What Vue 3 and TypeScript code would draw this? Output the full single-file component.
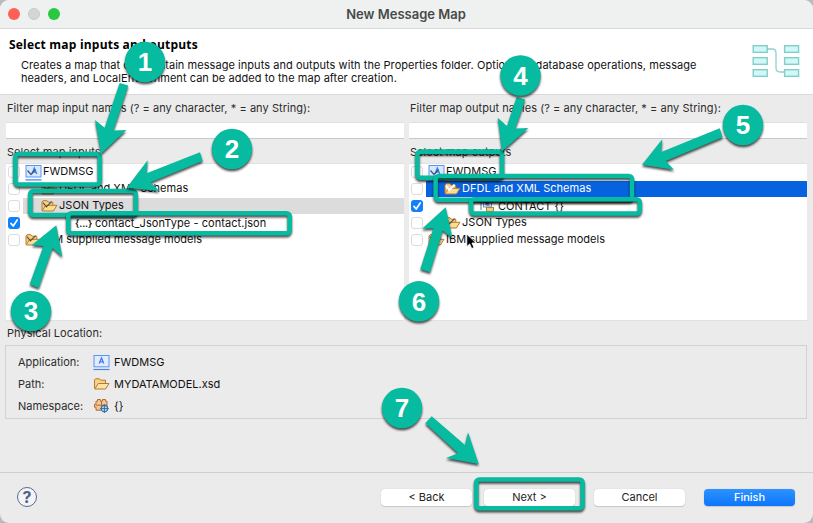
<script setup lang="ts">
type IconKind = 'app' | 'folder' | 'json' | 'element'

interface TreeRow {
  label: string
  level: number
  icon: IconKind
  checked?: boolean
  state?: 'muted' | 'active'
}

interface Pane {
  id: string
  filterLabel: string
  selectLabel: string
  rows: TreeRow[]
}

const panes: Pane[] = [
  {
    id: 'inputs',
    filterLabel: 'Filter map input names (? = any character, * = any String):',
    selectLabel: 'Select map inputs',
    rows: [
      { label: 'FWDMSG', level: 0, icon: 'app' },
      { label: 'DFDL and XML Schemas', level: 1, icon: 'folder' },
      { label: 'JSON Types', level: 1, icon: 'folder', state: 'muted' },
      { label: 'contact_JsonType - contact.json', level: 2, icon: 'json', checked: true },
      { label: 'IBM supplied message models', level: 0, icon: 'folder' },
    ],
  },
  {
    id: 'outputs',
    filterLabel: 'Filter map output names (? = any character, * = any String):',
    selectLabel: 'Select map outputs',
    rows: [
      { label: 'FWDMSG', level: 0, icon: 'app' },
      { label: 'DFDL and XML Schemas', level: 1, icon: 'folder', state: 'active' },
      { label: 'CONTACT {}', level: 2, icon: 'element', checked: true },
      { label: 'JSON Types', level: 1, icon: 'folder' },
      { label: 'IBM supplied message models', level: 0, icon: 'folder' },
    ],
  },
]

const boxes = [
  { x: 15.3, y: 154, w: 84.5, h: 30.5 },
  { x: 30.3, y: 191, w: 105.4, h: 24 },
  { x: 68.3, y: 213.3, w: 221.4, h: 20 },
  { x: 417.3, y: 151.6, w: 84.7, h: 26.2 },
  { x: 435.6, y: 176, w: 196.4, h: 23.8 },
  { x: 471, y: 199.3, w: 168.8, h: 14.2 },
  { x: 476.2, y: 479.5, w: 106.4, h: 28.8 },
]

const arrows = [
  '119.7,83 128.3,85.5 113.5,130.5 126.3,130 101,154 95,120 104.7,127.7',
  '200,152.3 202.7,161 150.7,182.3 159.3,191 126.7,187.7 147.7,160.3 146.7,173.3',
  '29.7,284.3 38.7,288 52.5,248 62.3,256.7 56.3,225.3 31.7,245.3 43.5,246',
  '516.7,97 525.3,99.5 515.3,128.5 528.3,128 502,151.5 497.7,117.7 507,126',
  '719.7,128.3 722.7,137.3 665.7,161 674,169.7 642,164.7 662.3,139.3 661.3,152',
  '420.3,269.3 430,272.3 442.7,230.5 452.3,237.7 445.7,207.3 422,228.7 433.5,228.3',
  '431.7,416.3 425.3,423.3 458,453.3 446,458 478.7,464 468,432.3 465,445',
]

const badges = [
  { n: 1, x: 145, y: 62 },
  { n: 2, x: 232, y: 149 },
  { n: 3, x: 31, y: 311 },
  { n: 4, x: 520.5, y: 75.5 },
  { n: 5, x: 743, y: 125 },
  { n: 6, x: 419, y: 301.3 },
  { n: 7, x: 402, y: 408 },
]
</script>

<template>
  <main class="window">
    <header class="titlebar">
      <div class="lights">
        <i class="light red"></i><i class="light grey"></i><i class="light green"></i>
      </div>
      <span class="title">New Message Map</span>
    </header>

    <section class="banner">
      <div>
        <h1>Select map inputs and outputs</h1>
        <p>
          Creates a map that can contain message inputs and outputs with the Properties folder. Optionally, database operations, message<br />
          headers, and LocalEnvironment can be added to the map after creation.
        </p>
      </div>
      <svg class="map-art" width="48" height="34" viewBox="0 0 48 34" fill="none" stroke="#7fcfce">
        <path d="M15 5h5q4 0 4 4v15q0 4 4 4h5" stroke="#8fd0d0" stroke-width="1.3" />
        <g fill="#d3f7f6" stroke-width="1.4">
          <rect x="1.2" y="1.7" width="14" height="6.6" />
          <rect x="1.2" y="13.7" width="14" height="6.6" />
          <rect x="1.2" y="25.7" width="14" height="6.6" />
          <rect x="32.6" y="1.7" width="14" height="6.6" />
          <rect x="32.6" y="13.7" width="14" height="6.6" />
          <rect x="32.6" y="25.7" width="14" height="6.6" />
        </g>
      </svg>
    </section>

    <section class="content">
      <div class="panes">
        <div v-for="pane in panes" :key="pane.id" class="pane">
          <label class="caption">{{ pane.filterLabel }}</label>
          <div class="field"></div>
          <label class="caption">{{ pane.selectLabel }}</label>
          <div class="tree">
            <div v-for="row in pane.rows" :key="row.label" class="row">
              <span class="check" :class="{ on: row.checked }">
                <svg v-if="row.checked" width="12" height="12" viewBox="0 0 12 12" fill="none" stroke="#fff" stroke-width="1.7" stroke-linecap="round" stroke-linejoin="round">
                  <path d="M3 6.4 5.2 9 9.2 3" />
                </svg>
              </span>
              <span class="item" :class="[row.state, 'level-' + row.level]">
                <svg v-if="row.icon === 'app'" width="17" height="17" viewBox="0 0 17 17" fill="none">
                  <rect x="1" y="1.5" width="15" height="11.5" fill="#d8e8fd" stroke="#5c94f0" />
                  <path d="M.5 15.8h16" stroke="#4784ee" stroke-width="1.2" />
                  <path d="M7 10 9.3 4.2 11.8 10M8 8h3" stroke="#3c7ff0" stroke-width="1.4" />
                  <path d="M2.5 6.5 6 10.5 10.5 5.5" stroke="#40587f" stroke-width="1.3" />
                </svg>
                <svg v-else-if="row.icon === 'folder'" width="17" height="16" viewBox="0 0 17 16">
                  <path d="M1 12.5V4l1-1.3h4l1.2 1.5h4.6v3.3" fill="#f6d28a" stroke="#b67b31" />
                  <path d="m1.2 12.8 3.5-5.5H16L12.4 13H1.5z" fill="#fbdc95" stroke="#b67b31" stroke-linejoin="round" />
                  <path v-if="row.state === 'active'" d="M2 4.8 5.4 9 10.6 3.6" fill="none" stroke="#fff" stroke-width="2" />
                  <path v-else d="M2 4.6 5.4 9 10.6 3.6" fill="none" stroke="#5b4a35" stroke-width="1.1" />
                </svg>
                <span v-else-if="row.icon === 'json'" class="braces">{...}</span>
                <svg v-else width="17" height="16" viewBox="0 0 17 16" fill="none">
                  <path d="M2 2v10" stroke="#697386" />
                  <rect x="4.5" y="2" width="8" height="7" fill="#e1edff" stroke="#6b95d2" />
                  <path d="M10.5 4H7v3h3.5M7 5.5h3" stroke="#255aa8" />
                  <rect x="7.5" y="9.5" width="7" height="4" fill="#f4cb7d" stroke="#b78039" />
                </svg>
                <span class="name">{{ row.label }}</span>
              </span>
            </div>
          </div>
        </div>
      </div>

      <label class="caption location-caption">Physical Location:</label>
      <div class="location">
        <span class="key">Application:</span>
        <svg width="17" height="17" viewBox="0 0 17 17" fill="none">
          <rect x="1" y="1.5" width="15" height="11.3" fill="#e0ecfd" stroke="#5c94f0" />
          <path d="M.5 15.5h16" stroke="#4784ee" stroke-width="1.2" />
          <path d="M6.2 9.6 8.5 4l2.3 5.6M7 7.8h3" stroke="#3c7ff0" stroke-width="1.3" />
        </svg>
        <span class="value">FWDMSG</span>
        <span class="key">Path:</span>
        <svg width="17" height="16" viewBox="0 0 17 16">
          <path d="M1.5 12.5V4l1-1.2h4l1.2 1.4h4.8v3.3" fill="#f6d28a" stroke="#b67b31" />
          <path d="m1.8 13 3.4-5.5H16L12.6 13z" fill="#fde3a6" stroke="#b67b31" stroke-linejoin="round" />
        </svg>
        <span class="value">MYDATAMODEL.xsd</span>
        <span class="key">Namespace:</span>
        <svg width="17" height="16" viewBox="0 0 17 16" fill="none">
          <path d="M4.5 3.2V1.5h3v1.7h2V1.5h3v1.7h1.5v9H3v-3H1.5v-3H3v-3z" fill="#f2c795" stroke="#ae6c36" />
          <path d="M8.5 3v9M3 7.2h11" stroke="#ae6c36" />
          <circle cx="11.4" cy="10.6" r="3.2" fill="#b9d8ef" stroke="#3370a4" stroke-width="1.2" />
          <path d="M11.4 6.2v8.8M7 10.6h8.8" stroke="#3370a4" />
        </svg>
        <span class="value">{}</span>
      </div>
    </section>

    <footer class="footer">
      <span class="help">?</span>
      <div class="buttons">
        <button type="button">&lt; Back</button>
        <button type="button" class="next">Next &gt;</button>
        <button type="button" class="cancel">Cancel</button>
        <button type="button" class="primary">Finish</button>
      </div>
    </footer>

    <svg class="annotations" width="813" height="523" viewBox="0 0 813 523">
      <g v-for="(b, i) in boxes" :key="'b' + i" class="mark">
        <rect :x="b.x" :y="b.y" :width="b.w" :height="b.h" rx="3.2" fill="none" stroke="#06bba0" stroke-width="4.6" />
      </g>
      <path class="cursor" d="M466.8 234.2v12.4l2.9-2.7 2 4.6 2.3-1-2-4.5h3.9z" fill="#000" stroke="#fff" stroke-width=".8" />
      <g v-for="(points, i) in arrows" :key="'a' + i" class="mark">
        <polygon :points="points" fill="#06bba0" />
      </g>
      <g v-for="b in badges" :key="b.n" class="mark">
        <circle :cx="b.x" :cy="b.y" r="20.2" fill="#06bba0" />
      </g>
      <text v-for="b in badges" :key="'t' + b.n" :x="b.x" :y="b.y + 9.4" class="digit">{{ b.n }}</text>
    </svg>
  </main>
</template>

<style>
body {
  background: #b9bab9;
}
</style>

<style scoped>
* {
  box-sizing: border-box;
}
.window {
  position: relative;
  display: flex;
  flex-direction: column;
  width: 813px;
  height: 523px;
  overflow: hidden;
  border-radius: 9px;
  background: #ebebeb;
  color: #111;
  font: 11px/13px Inter, "Liberation Sans", sans-serif;
  letter-spacing: .05px;
  white-space: nowrap;
}
.titlebar {
  display: grid;
  grid-template-columns: 1fr auto 1fr;
  align-items: center;
  height: 29px;
  padding: 0 9px 0 8px;
  border-bottom: 1px solid #d9dad9;
  background: #eff1f0;
}
.lights {
  display: flex;
  gap: 8px;
}
.light {
  width: 12px;
  height: 12px;
  border-radius: 50%;
}
.red { background: #fe5f57; }
.grey { background: #d4d6d5; border: 1px solid #c7c8c7; }
.green { background: #28c840; }
.title {
  color: #474948;
  font-size: 13px;
  font-weight: 600;
  letter-spacing: 0;
}
.banner {
  display: flex;
  justify-content: space-between;
  height: 66px;
  padding: 8px 14px 0 9px;
  border-bottom: 1px solid #d9d9d9;
  background: #fff;
}
h1 {
  margin: 0;
  color: #000;
  font: bold 12px/15px "Open Sans", "Noto Sans", sans-serif;
  letter-spacing: .2px;
}
p {
  margin: 7px 0 0 12px;
}
.map-art {
  margin: 7px -1px 0 0;
}
.content {
  flex: 1;
  padding: 7px 6px 0;
}
.panes {
  display: grid;
  grid-template-columns: 398px 398px;
  gap: 5px;
}
.pane {
  display: flex;
  flex-direction: column;
}
.caption {
  display: block;
  height: 13px;
  padding-left: 1px;
  color: #2c2c2c;
}
.field {
  height: 17px;
  margin: 7px 0;
  border-bottom: 1px solid #c9c9c9;
  background: #fff;
  box-shadow: inset 0 1px #e0e0e0;
}
.tree {
  height: 158px;
  margin-top: 4px;
  border: solid #e2e2e2;
  border-width: 1px 0;
  background: #fff;
}
.row {
  display: flex;
  align-items: flex-start;
  height: 17px;
}
.check {
  flex: none;
  display: block;
  width: 12px;
  height: 12px;
  margin: 2px 6px 0 2px;
  border: 1px solid #dcdcdc;
  border-radius: 3px;
  background: #fff;
}
.check.on {
  border: 0;
  background: #1180fb;
}
.check svg {
  display: block;
}
.item {
  display: flex;
  flex: 1;
  align-items: center;
  height: 16px;
  margin-left: -3px;
  padding-left: 2px;
}
.item svg {
  flex: none;
}
.level-1 { padding-left: 18px; }
.level-2 { padding-left: 53px; }
.muted { background: #dcdcdc; }
.active { background: #0762df; color: #fff; }
.braces {
  flex: none;
  width: 18px;
  margin-left: -1px;
  font-size: 9.5px;
  font-weight: 600;
  letter-spacing: -.1px;
}
.name {
  margin-left: 1px;
  padding-bottom: 1px;
  letter-spacing: .02px;
}
.level-2 .name {
  margin-left: 2px;
  padding: 1px 0 0;
}
.braces + .name {
  letter-spacing: .06px;
}
.location-caption {
  margin-top: 6px;
}
.location {
  display: grid;
  grid-template-columns: 75px 21px 1fr;
  grid-auto-rows: 22px;
  align-items: center;
  height: 74px;
  margin: 5px 0 0 -1px;
  padding: 5px 0 0 12px;
  border: 1px solid #d2d2d2;
  letter-spacing: 0;
}
.key {
  color: #2c2c2c;
}
.footer {
  display: flex;
  justify-content: space-between;
  height: 51px;
  padding: 16px 18px 0 17px;
  border-top: 1px solid #cfcfcf;
}
.help {
  width: 20px;
  height: 20px;
  margin-top: -2px;
  border: 1px solid #566a91;
  border-radius: 50%;
  background: #f4f4f6;
  color: #4f6289;
  font-size: 16px;
  font-weight: 700;
  line-height: 18px;
  text-align: center;
}
.buttons {
  display: flex;
}
button {
  width: 91px;
  height: 17px;
  padding: 0 0 1px;
  border: 0;
  border-radius: 4px;
  background: #fff;
  box-shadow: 0 0 1px #0003, 0 1px 1px #0002;
  color: #222;
  font: 11px/16px Inter, sans-serif;
}
.next { margin-left: 12px; }
.cancel { margin-left: 19px; }
.primary {
  margin-left: 19px;
  background: linear-gradient(#2e92ff, #0a76fb);
  color: #fff;
  font-weight: 500;
}
.annotations {
  position: absolute;
  inset: 0;
}
.mark {
  filter: drop-shadow(.5px 2px .8px rgba(0, 0, 0, .7));
}
.digit {
  fill: #fff;
  font: bold 26px "Liberation Sans", Arial, sans-serif;
  text-anchor: middle;
}
</style>
